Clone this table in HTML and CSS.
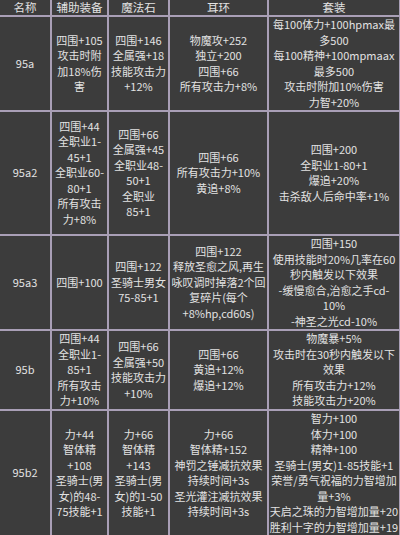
FILE: index.html
```html
<!DOCTYPE html>
<html lang="zh">
<head>
<meta charset="utf-8">
<title>95套装</title>
<link rel="stylesheet" href="styles.css">
</head>
<body>
<table class="grid">
  <colgroup>
    <col class="c1"><col class="c2"><col class="c3"><col class="c4"><col class="c5">
  </colgroup>
  <thead>
    <tr class="head">
      <th>名称</th><th>辅助装备</th><th>魔法石</th><th>耳环</th><th>套装</th>
    </tr>
  </thead>
  <tbody>
    <tr class="r1">
      <td>95a</td>
      <td>四围+105<br>攻击时附<br>加18%伤<br>害</td>
      <td>四围+146<br>全属强+18<br>技能攻击力<br>+12%</td>
      <td>物魔攻+252<br>独立+200<br>四围+66<br>所有攻击力+8%</td>
      <td>每100体力+100hpmax最<br>多500<br>每100精神+100mpmaax<br>最多500<br>攻击时附加10%伤害<br>力智+20%</td>
    </tr>
    <tr class="r2">
      <td>95a2</td>
      <td>四围+44<br>全职业1-<br>45+1<br>全职业60-<br>80+1<br>所有攻击<br>力+8%</td>
      <td>四围+66<br>全属强+45<br>全职业48-<br>50+1<br>全职业<br>85+1</td>
      <td>四围+66<br>所有攻击力+10%<br>黄追+8%</td>
      <td>四围+200<br>全职业1-80+1<br>爆追+20%<br>击杀敌人后命中率+1%</td>
    </tr>
    <tr class="r3">
      <td>95a3</td>
      <td>四围+100</td>
      <td>四围+122<br>圣骑士男女<br>75-85+1</td>
      <td>四围+122<br>释放圣愈之风,再生<br>咏叹调时掉落2个回<br>复碎片(每个<br>+8%hp,cd60s)</td>
      <td>四围+150<br>使用技能时20%几率在60<br>秒内触发以下效果<br>-缓慢愈合,治愈之手cd-<br>10%<br>-神圣之光cd-10%</td>
    </tr>
    <tr class="r4">
      <td>95b</td>
      <td>四围+44<br>全职业1-<br>85+1<br>所有攻击<br>力+10%</td>
      <td>四围+66<br>全属强+50<br>技能攻击力<br>+10%</td>
      <td>四围+66<br>黄追+12%<br>爆追+12%</td>
      <td>物魔暴+5%<br>攻击时在30秒内触发以下<br>效果<br>所有攻击力+12%<br>技能攻击力+20%</td>
    </tr>
    <tr class="r5">
      <td>95b2</td>
      <td>力+44<br>智体精<br>+108<br>圣骑士(男<br>女)的48-<br>75技能+1</td>
      <td>力+66<br>智体精<br>+143<br>圣骑士(男<br>女)的1-50<br>技能+1</td>
      <td>力+66<br>智体精+152<br>神罚之锤减抗效果<br>持续时间+3s<br>圣光灌注减抗效果<br>持续时间+3s</td>
      <td>智力+100<br>体力+100<br>精神+100<br>圣骑士(男女)1-85技能+1<br>荣誉/勇气祝福的力智增加<br>量+3%<br>天启之珠的力智增加量+20<br>胜利十字的力智增加量+19</td>
    </tr>
  </tbody>
</table>
</body>
</html>
```

FILE: styles.css
```css
html, body {
  margin: 0;
  padding: 0;
  background: #3c3c3c;
}

.grid {
  width: 400px;
  border-collapse: collapse;
  table-layout: fixed;
  background: #3c3c3c;
  color: #e2e2e2;
  font-family: "Noto Sans CJK SC", "Liberation Sans", sans-serif;
  font-size: 11px;
  line-height: 15.5px;
}

.c1 { width: 51px; }
.c2 { width: 57px; }
.c3 { width: 61px; }
.c4 { width: 99px; }
.c5 { width: 132px; }

.grid th,
.grid td {
  border: 2px solid #a99fb6;
  padding: 0;
  text-align: center;
  vertical-align: middle;
  white-space: nowrap;
  font-weight: normal;
}

.grid th {
  border-top: none;
  font-size: 11.5px;
  line-height: 15px;
}

.grid th:first-child,
.grid td:first-child {
  border-left: none;
}

.head { height: 16px; }
.r1 { height: 93px; }
.r2 { height: 124px; }
.r3 { height: 95px; }
.r4 { height: 80px; }
.r5 { height: 125px; }
```
